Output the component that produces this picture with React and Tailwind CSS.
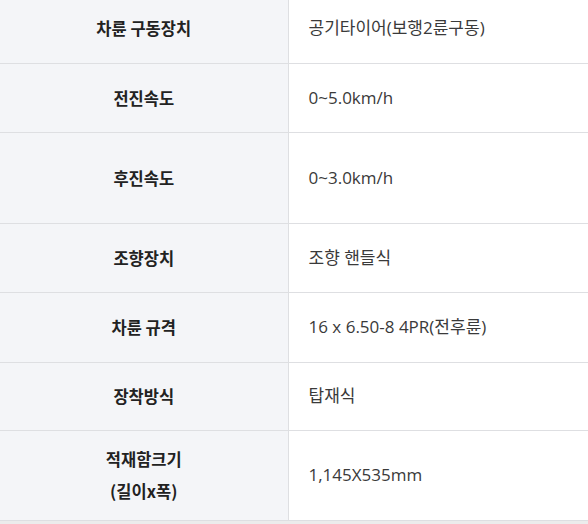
const rows = [
  { label: '차륜 구동장치', value: '공기타이어(보행2륜구동)', h: 'h-[69px]' },
  { label: '전진속도', value: '0~5.0km/h', h: 'h-[69px]' },
  { label: '후진속도', value: '0~3.0km/h', h: 'h-[91px]' },
  { label: '조향장치', value: '조향 핸들식', h: 'h-[69px]' },
  { label: '차륜 규격', value: '16 x 6.50-8 4PR(전후륜)', h: 'h-[70px]' },
  { label: '장착방식', value: '탑재식', h: 'h-[68px]' },
  { label: ['적재함크기', '(길이x폭)'], value: '1,145X535mm', h: 'h-[90px]' },
];

export default function App() {
  return (
    <div className="w-[588px] h-[524px] overflow-hidden bg-[#ececec] font-['Noto_Sans_CJK_KR','Noto_Sans',sans-serif]">
      <table className="w-full border-collapse -mt-[6px] bg-white">
        <tbody>
          {rows.map((r, i) => (
            <tr key={i} className={`${r.h} border-b border-[#dedfe2]`}>
              <th className="w-[288px] bg-[#f4f5f8] border-r border-[#dedfe2] text-center align-middle text-[16.5px] font-bold text-[#222] leading-[32px]">
                {Array.isArray(r.label) ? r.label.map((l) => <div key={l}>{l}</div>) : r.label}
              </th>
              <td className="pl-[20px] align-middle text-left text-[17px] text-[#3a3a3a] leading-[32px] font-['Open_Sans','Noto_Sans_CJK_KR',sans-serif]">
                {r.value}
              </td>
            </tr>
          ))}
        </tbody>
      </table>
    </div>
  );
}
